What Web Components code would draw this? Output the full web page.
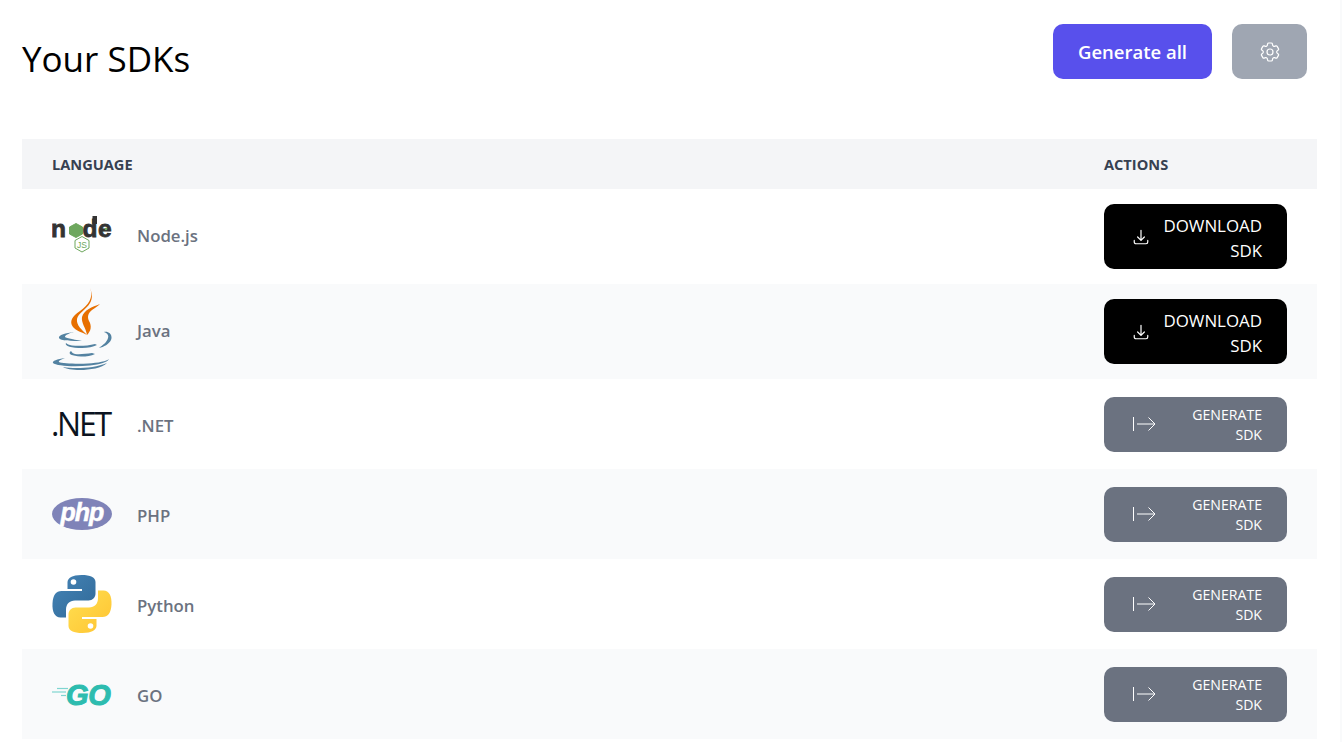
<!DOCTYPE html>
<html lang="en">
<head>
<meta charset="utf-8">
<title>Your SDKs</title>
<style>
  html, body { margin: 0; padding: 0; background: #f9fafb; }
  body { font-family: "Open Sans", "Noto Sans", sans-serif; overflow: hidden; }
</style>
</head>
<body>
<sdk-page>
  <sdk-row name="Node.js" tall ready><svg slot="logo" width="60" height="41" viewBox="0 0 60 41">
    <g font-family="Liberation Sans, sans-serif" font-weight="700" font-size="24.500" fill="#333" stroke="#333" stroke-width=".8">
      <text x="-1" y="21">n</text>
      <text x="30.500" y="21">d</text>
      <text x="46" y="21">e</text>
    </g>
    <rect x="40.500" y="0" width="4.500" height="8" fill="#333"/>
    <polygon points="24,7.500 30.500,11 30.500,18 24,21.500 17.500,18 17.500,11" fill="#6da75d" stroke="#6da75d" stroke-width="1" stroke-linejoin="round"/>
    <circle cx="54" cy="13" r="1.300" fill="#6da75d"/>
    <polygon points="30,20.500 37,24.500 37,32 30,36 23,32 23,24.500" fill="#fff" stroke="#6da75d" stroke-width="1"/>
    <text x="30" y="31.500" text-anchor="middle" font-family="Liberation Sans, sans-serif" font-size="8.500" fill="#6da75d">JS</text>
  </svg></sdk-row>
  <sdk-row name="Java" tall ready striped><svg slot="logo" width="60" height="87" viewBox="0 0 60 87">
    <path d="M38 0C42 10 36 17 28 23C20 28 17 34 21 39C24 43 30 44 35 47C30 42 24 37 25 31C26 25 34 22 38 15C41 10 40 5 38 0z" fill="#e76f00"/>
    <path d="M48 16C40 19 32 22 30 29C29 35 34 40 35 47C39 43 40 38 37 33C35 29 36 25 40 22C43 20 46 18 48 16z" fill="#e76f00"/>
    <path d="M22 44C14 45 6 47 7 50C8 53 20 53 30 53C20 51 12 50 13 48.500C14 46.500 18 45 22 44z" fill="#5382a1"/>
    <path d="M52 44C57 43 61 47 59 52C57 56 52 59 47 60C51 57 55 54 56 50C57 47 55 45 52 44z" fill="#5382a1"/>
    <path d="M14 55C12 58 20 60 30 60C36 60 41 59 45 57L43 56C36 58 26 58 20 57.500C17 57 15 56 14 55z" fill="#5382a1"/>
    <path d="M19 63C15 66 20 68 29 68.500C35 68.500 39 68 43 66L40 65C34 66 27 66.500 23 66C21 65.500 20 64.500 19 63z" fill="#5382a1"/>
    <path d="M13 70C5 71 0 73 1 75C4 78 22 79 38 77.500C48 76.500 56 74 57 71C55 73 46 75 36 75.500C24 76 10 75.500 7 74C6 73 10 71 13 70z" fill="#5382a1"/>
    <path d="M11 79C22 81 42 80.500 55 75C50 80 38 82 28 82C20 82 14 81 11 79z" fill="#5382a1"/>
  </svg></sdk-row>
  <sdk-row name=".NET"><span slot="logo" class="net">.NET</span></sdk-row>
  <sdk-row name="PHP" striped><svg slot="logo" width="60" height="32" viewBox="0 0 60 32">
    <ellipse cx="30" cy="16" rx="30" ry="16" fill="#7f83b8"/>
    <text x="30" y="23" text-anchor="middle" font-family="Liberation Sans, sans-serif" font-weight="700" font-style="italic" font-size="25" fill="#fff" stroke="#fff" stroke-width=".5" letter-spacing="-1">php</text>
  </svg></sdk-row>
  <sdk-row name="Python"><svg slot="logo" width="60" height="60" viewBox="0 0 60 60">
    <defs>
      <linearGradient id="pb" x1="0" y1="0" x2="1" y2="1"><stop offset="0" stop-color="#4584b6"/><stop offset="1" stop-color="#306998"/></linearGradient>
      <linearGradient id="py" x1="0" y1="0" x2="1" y2="1"><stop offset="0" stop-color="#ffe052"/><stop offset="1" stop-color="#ffc331"/></linearGradient>
    </defs>
    <path d="M29.500 1C20 1 16 4 15.500 8v7H30v2H9.500C4 17 1 21 .5 29.500 0 38 3 43.500 8.500 43.500H14v-7.500c0-6 3.500-9.500 9-9.500h13.500c4 0 7-3 7-7V8c0-4.500-5-7-14-7z" fill="url(#pb)"/>
    <circle cx="21.500" cy="8" r="2.800" fill="#fff"/>
    <path d="M30.500 59c9.500 0 13.500-3 14-7v-7H30v-2h20.500c5.500 0 8.500-4 9-12.500.5-8.500-2.500-14-8-14H46v7.500c0 6-3.500 9.500-9 9.500H23.500c-4 0-7 3-7 7V52c0 4.500 5 7 14 7z" fill="url(#py)"/>
    <circle cx="38.500" cy="52" r="2.800" fill="#fff"/>
  </svg></sdk-row>
  <sdk-row name="GO" striped><svg slot="logo" width="70" height="40" viewBox="0 0 70 40">
    <g stroke="#7fd5d0" stroke-width="1.200"><path d="M5 14.500h11"/><path d="M0 18h14"/><path d="M9 21.500h5"/></g>
    <text x="14" y="30.500" font-family="Liberation Sans, sans-serif" font-weight="700" font-style="italic" font-size="29" fill="#2dbcaf" stroke="#2dbcaf" stroke-width="1" letter-spacing="-.2">GO</text>
  </svg></sdk-row>
</sdk-page>

<script>
  const DOWNLOAD_ICON = '<svg width="18" height="18" viewBox="0 0 24 24" fill="none" stroke="currentColor" stroke-width="1.600" stroke-linecap="round" stroke-linejoin="round"><path d="M3 16.500v2.250A2.250 2.250 0 005.250 21h13.500A2.250 2.250 0 0021 18.750V16.500M16.500 12L12 16.500m0 0L7.500 12m4.500 4.500V3"/></svg>'
  const ARROW_ICON = '<svg width="25" height="16" viewBox="0 0 25 16" fill="none" stroke="currentColor" stroke-width="1"><path d="M1.500 1v14M5 8h18M16.500 1.500L23 8l-6.500 6.500"/></svg>'
  const GEAR_ICON = '<svg width="24" height="24" viewBox="0 0 24 24" fill="none" stroke="currentColor" stroke-width="1.200" stroke-linejoin="round"><path d="M9.594 3.940c.09-.542.56-.94 1.110-.94h2.593c.55 0 1.020.398 1.110.94l.213 1.281c.063.374.313.686.645.870.074.040.147.083.22.127.325.196.72.257 1.075.124l1.217-.456a1.125 1.125 0 011.370.490l1.296 2.247a1.125 1.125 0 01-.26 1.431l-1.003.827c-.293.24-.438.613-.431.992a6.759 6.759 0 010 .255c-.007.378.138.75.43.99l1.005.828c.424.35.534.954.26 1.430l-1.298 2.247a1.125 1.125 0 01-1.369.491l-1.217-.456c-.355-.133-.75-.072-1.076.124a6.570 6.570 0 01-.22.128c-.331.183-.581.495-.644.869l-.213 1.280c-.09.543-.56.941-1.110.941h-2.594c-.55 0-1.020-.398-1.110-.94l-.213-1.281c-.062-.374-.312-.686-.644-.87a6.520 6.520 0 01-.22-.127c-.325-.196-.72-.257-1.076-.124l-1.217.456a1.125 1.125 0 01-1.369-.49l-1.297-2.247a1.125 1.125 0 01.26-1.431l1.004-.827c.292-.24.437-.613.43-.992a6.932 6.932 0 010-.255c.007-.378-.138-.75-.43-.99l-1.004-.828a1.125 1.125 0 01-.26-1.430l1.297-2.247a1.125 1.125 0 011.370-.491l1.216.456c.356.133.751.072 1.076-.124.072-.044.146-.087.22-.128.332-.183.582-.495.644-.869l.214-1.281z"/><circle cx="12" cy="12" r="3"/></svg>'

  /*
   * The white page with its title bar and table header.
   */
  customElements.define('sdk-page',
    class extends HTMLElement {
      constructor () {
        super()
        this.attachShadow({ mode: 'open' }).innerHTML = `
          <style>
            :host { display: block; width: 1340px; height: 742px; background: #fff; overflow: hidden; }
            header { display: flex; align-items: flex-start; height: 139px; box-sizing: border-box; padding: 24px 33px 60px 22px; }
            h1 { flex: 1; margin: 7px 0 0; font-size: 35px; line-height: 55px; font-weight: 400; color: #000; }
            .primary { display: flex; align-items: center; justify-content: center; width: 159px; height: 55px; border-radius: 10px; background: #5850ec; color: #fff; font-size: 18.500px; font-weight: 600; }
            .gear { display: flex; align-items: center; justify-content: center; width: 75px; height: 55px; margin-left: 20px; border-radius: 10px; background: #9fa6b2; color: #fff; }
            .table { margin: 0 23px 0 22px; }
            .head { display: flex; align-items: center; justify-content: space-between; height: 50px; padding: 0 30px; background: #f4f5f7; color: #374151; font-size: 14.600px; font-weight: 700; }
            .head span:last-child { width: 183px; }
          </style>
          <header>
            <h1>Your SDKs</h1>
            <div class="primary">Generate all</div>
            <div class="gear">${GEAR_ICON}</div>
          </header>
          <div class="table">
            <div class="head"><span>LANGUAGE</span><span>ACTIONS</span></div>
            <slot></slot>
          </div>`
      }
    }
  )

  /*
   * One language row. "ready" gives the black download button.
   */
  customElements.define('sdk-row',
    class extends HTMLElement {
      connectedCallback () {
        const ready = this.hasAttribute('ready')
        const label = ready ? 'DOWNLOAD SDK' : 'GENERATE SDK'
        this.attachShadow({ mode: 'open' }).innerHTML = `
          <style>
            :host { display: flex; align-items: center; height: 90px; padding: 0 30px; background: #fff; }
            :host([tall]) { height: 95px; }
            :host([striped]) { background: #f9fafb; }
            .logo { display: flex; align-items: center; justify-content: flex-start; width: 60px; }
            ::slotted(svg) { flex-shrink: 0; }
            ::slotted(.net) { font-family: "Open Sans", sans-serif; font-size: 32px; line-height: 40px; letter-spacing: -2.300px; margin-left: -1px; color: #0b1320; white-space: nowrap; }
            .name { flex: 1; margin: 2px 0 0 25px; font-size: 16.800px; font-weight: 550; color: #6b7280; }
            :host([tall]) .name { margin-top: -2px; }
            .btn { display: flex; align-items: center; justify-content: space-between; box-sizing: border-box; width: 183px; height: 55px; padding: 0 25px 0 28px; border-radius: 10px; background: #6b7280; color: #fff; font-size: 14.100px; line-height: 20px; text-align: right; }
            .btn span { width: 80px; position: relative; top: 1px; }
            .btn.ready { height: 65px; background: #000; font-size: 16.900px; line-height: 25px; }
            .btn.ready span { width: 110px; }
          </style>
          <div class="logo"><slot name="logo"></slot></div>
          <div class="name">${this.getAttribute('name')}</div>
          <div class="btn ${ready ? 'ready' : ''}">${ready ? DOWNLOAD_ICON : ARROW_ICON}<span>${label}</span></div>`
      }
    }
  )
</script>
</body>
</html>
